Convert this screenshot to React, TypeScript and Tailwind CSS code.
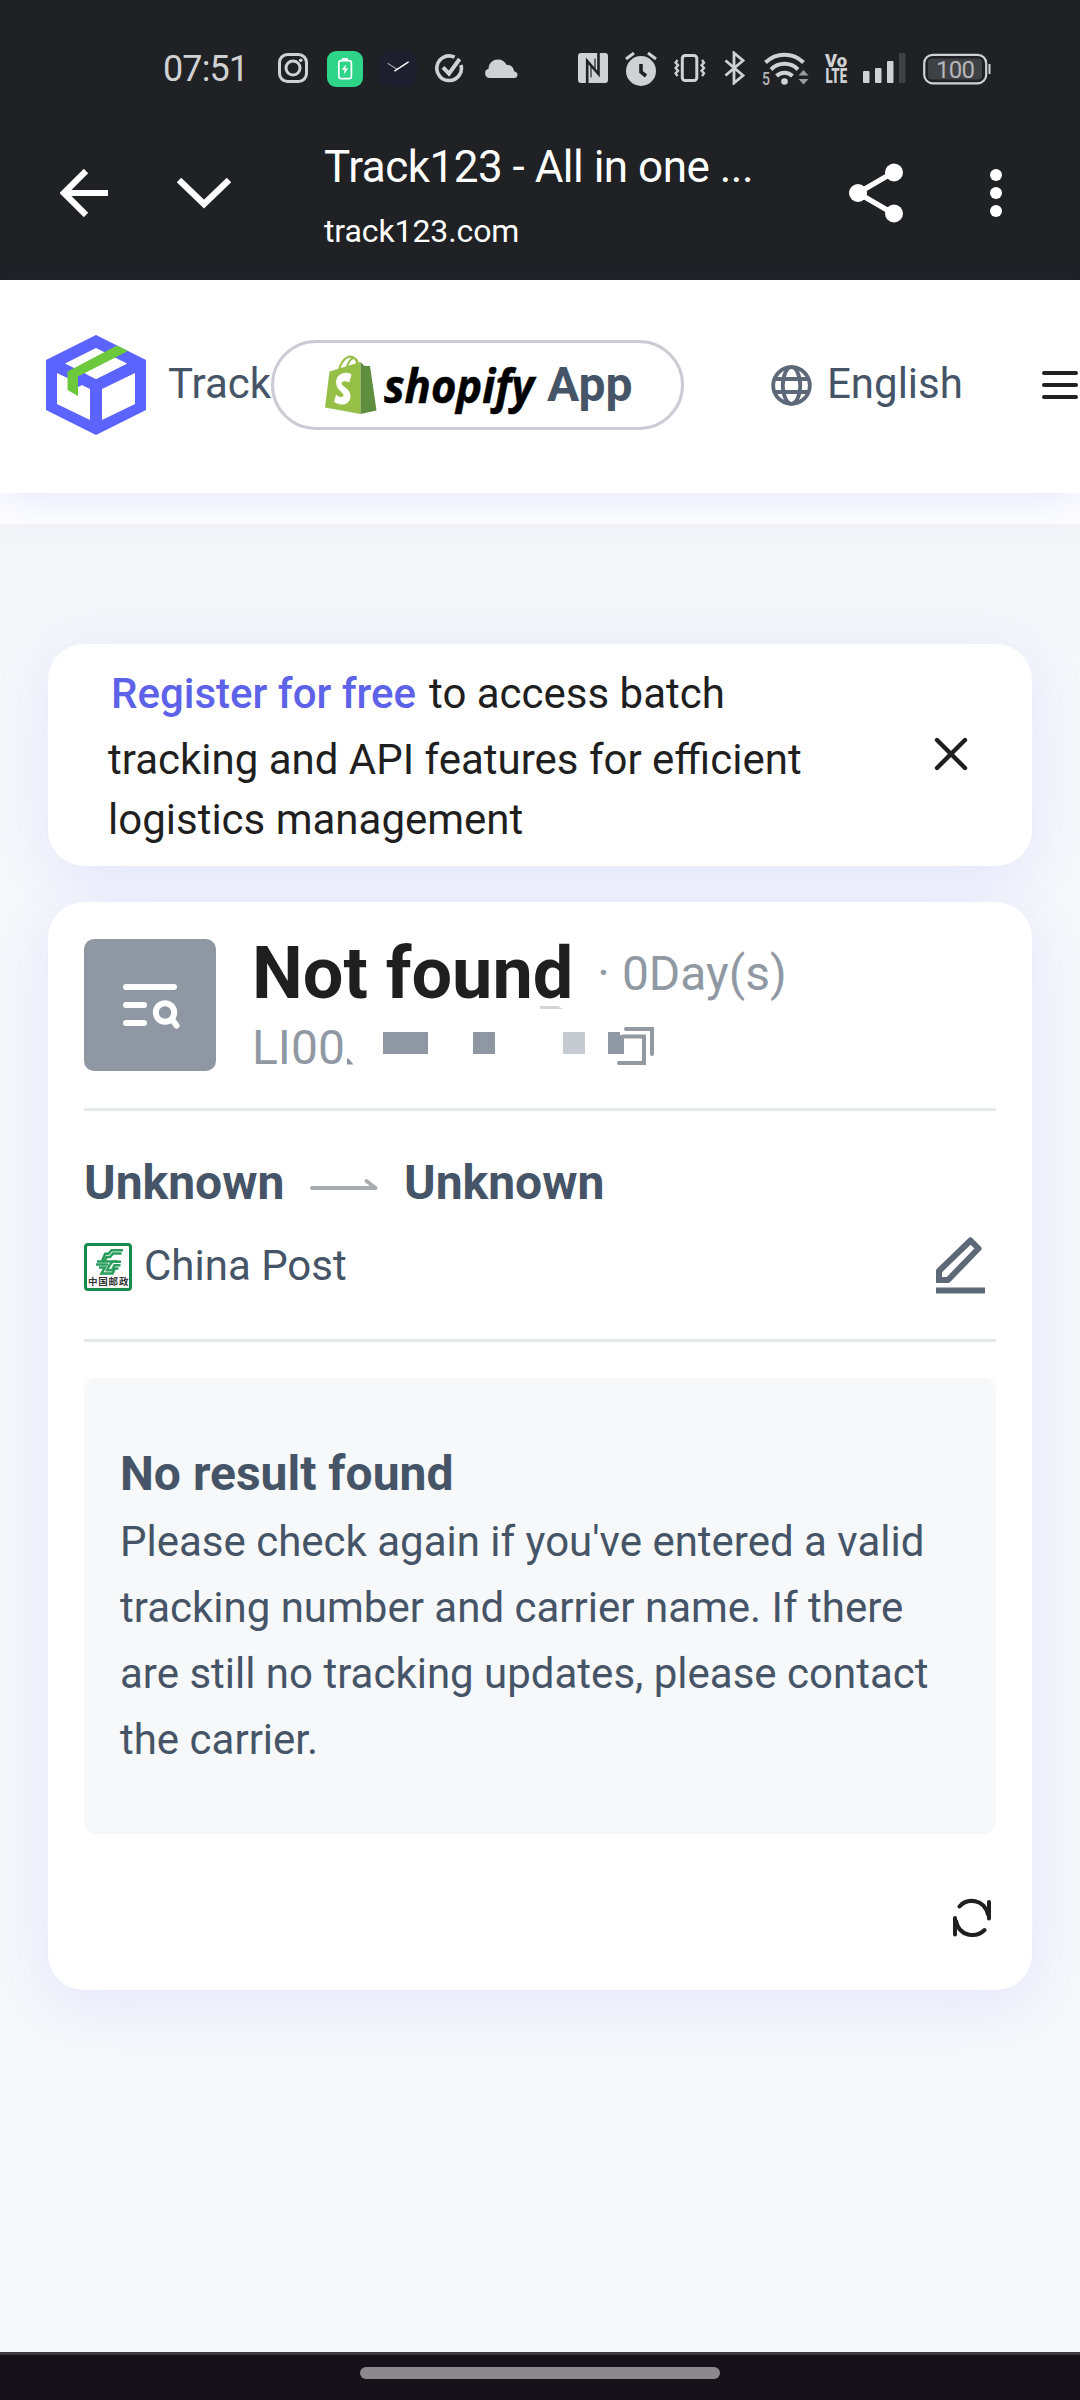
import type { ReactNode } from "react";

type IconProps = { className?: string };

function StatusBar() {
  return (
    <div className="flex h-[136px] items-center pl-[163px] text-[#d0d1d3]">
      <span className="mt-[2px] w-[115px] text-[36px] leading-[44px] tracking-[-0.9px]">07:51</span>

      {/* Notificaties */}
      <svg className="h-[30px] w-[30px]" viewBox="0 0 30 30" fill="none" stroke="currentColor" strokeWidth="3">
        <rect x="1.5" y="1.5" width="27" height="27" rx="8" />
        <circle cx="15" cy="15" r="7" />
        <circle cx="22.8" cy="7.2" r="1.8" fill="currentColor" stroke="none" />
      </svg>
      <svg className="ml-[19px] mt-[2px] h-[36px] w-[36px]" viewBox="0 0 36 36" fill="none">
        <rect width="36" height="36" rx="9" fill="#2ed589" />
        <rect x="11.8" y="9.6" width="12.6" height="18" rx="2.4" stroke="#fff" strokeWidth="1.7" />
        <path d="M15.4 9V7.6h5.2V9z" fill="#fff" stroke="#fff" />
        <path d="m18.8 13.4-4 5.4h2.6l-.4 4.4 4.2-5.6h-2.8z" fill="#fff" />
      </svg>
      <svg className="ml-[17px] mt-[2px] h-[36px] w-[37px]" viewBox="0 0 37 36" fill="none" strokeLinecap="round">
        <rect width="37" height="36" rx="9" fill="#1d1f2e" />
        <path d="m8 12.5 9 5.8" stroke="#9a9ca5" strokeWidth="1.2" />
        <path d="m14.8 19.8 13.4-8.6" stroke="#fff" strokeWidth="1.4" />
      </svg>
      <svg className="ml-[18px] mt-[1px] h-[30px] w-[29px]" viewBox="0 0 29 30" fill="none" stroke="currentColor" strokeWidth="3.6">
        <path d="M19.6 3.2A12.3 12.3 0 1 0 26 11" />
        <path d="m8 13.400 6 6.200L24.600 5" strokeWidth="4" />
      </svg>
      <svg className="ml-[21px] mt-[1px] h-[19px] w-[33px]" viewBox="0 0 33 19" fill="currentColor">
        <path d="M4.800 19A4.700 4.700 0 0 1 3.500 9.800C3.800 4 8 .6 13 .6c4 0 7 2 8.400 5.200 4.200-.2 7.200 2.400 7.600 6.400 2.200.3 3.500 1.700 3.500 3.500 0 2-1.400 3.300-3.400 3.300z" />
      </svg>

      {/* Systeem */}
      <svg className="ml-[60px] h-[30px] w-[30px]" viewBox="0 0 30 30" fill="none">
        <rect width="30" height="30" rx="3" fill="currentColor" />
        <path d="M9.200 30V8L20.500 21V0" stroke="#202124" strokeWidth="2.600" />
        <path d="M13 24.500V12M17 5.500V16" stroke="#202124" strokeWidth="1.200" />
      </svg>
      <svg className="ml-[17px] mt-[1px] h-[34px] w-[32px]" viewBox="0 0 32 34" fill="none" stroke="currentColor">
        <circle cx="16" cy="19" r="15" fill="currentColor" stroke="none" />
        <path d="m1 7 8-6M31 7l-8-6" strokeWidth="3" />
        <path d="M16 12v8l5 4" stroke="#202124" strokeWidth="3.600" />
      </svg>
      <svg className="ml-[17px] h-[30px] w-[32px]" viewBox="0 0 32 30" fill="none" stroke="currentColor">
        <rect x="8.300" y="2.500" width="14.500" height="25" rx="3" strokeWidth="3" />
        <path d="m3.600 7-2 2.600 2.400 2.700-2.400 2.700L4 17.700l-2.400 2.700 2 2.600M28 7l2 2.600-2.400 2.700 2.400 2.700-2.400 2.700 2.400 2.700L28 23" strokeWidth="2.400" />
      </svg>
      <svg className="ml-[18px] h-[34px] w-[22px]" viewBox="0 0 22 34" fill="none" stroke="currentColor" strokeWidth="2.800">
        <path d="M1.500 9.500 19 24.500l-9 7.500V2l9 7.500-17.500 15" />
      </svg>
      <svg className="ml-[16px] h-[36px] w-[48px] overflow-visible" viewBox="0 0 48 36" fill="none" stroke="currentColor" strokeWidth="4">
        <path d="M3.500 12.500a27 27 0 0 1 38 0M9 19.500a19 19 0 0 1 27 0M14.500 26a11.500 11.500 0 0 1 16 0" />
        <circle cx="22.500" cy="31.500" r="3.300" fill="currentColor" stroke="none" />
        <path d="m36.500 25.500 5-5.500 5 5.500zM36.500 29l5 5.500 5-5.500z" fill="#9a9b9d" stroke="none" />
        <text x="0" y="34.500" fontSize="18" fontWeight="500" textLength="8" lengthAdjust="spacingAndGlyphs" fill="#b5b6b8" stroke="none">5</text>
      </svg>
      <svg className="ml-[14px] h-[32px] w-[24px] overflow-visible" viewBox="0 0 24 32" fill="currentColor" fontWeight="900">
        <text x="1" y="14.800" fontSize="19" textLength="22" lengthAdjust="spacingAndGlyphs">Vo</text>
        <text x="1.500" y="31" fontSize="20" textLength="21.500" lengthAdjust="spacingAndGlyphs">LTE</text>
      </svg>
      <svg className="ml-[15px] h-[30px] w-[43px]" viewBox="0 0 43 30" fill="currentColor">
        <rect y="18" width="6.500" height="12" rx="1" />
        <rect x="12" y="15" width="6.500" height="15" rx="1" />
        <rect x="24" y="8" width="6.500" height="22" rx="1" />
        <rect x="36" width="6.500" height="30" rx="1" fill="#404144" />
      </svg>
      <svg className="ml-[17px] mt-[1px] h-[32px] w-[68px]" viewBox="0 0 68 32" fill="none">
        <rect x="1.200" y="1.800" width="62" height="28.500" rx="8.500" stroke="currentColor" strokeWidth="2.200" />
        <rect x="5" y="5.500" width="54" height="21" rx="4" fill="#404144" />
        <path d="M66.500 11v10" stroke="currentColor" strokeWidth="2" />
        <text x="13" y="24.600" fontSize="24" fill="#b5b6b8" textLength="39">100</text>
      </svg>
    </div>
  );
}

function BrowserBar() {
  return (
    <div className="flex h-[144px] items-start pl-[60px] text-white">
      <svg className="mt-[33px] h-[48px] w-[48px]" viewBox="0 0 48 48" fill="none" stroke="currentColor" strokeWidth="6.200">
        <path d="M48 24H5M26 2 4 24l22 22" />
      </svg>
      <svg className="ml-[68px] mt-[40px] h-[34px] w-[56px]" viewBox="0 0 56 34" fill="none" stroke="currentColor" strokeWidth="6.400">
        <path d="m3 4 25 24L53 4" />
      </svg>
      <div className="ml-[92px] mt-[5px] w-[525px]">
        <div className="text-[44px] leading-[52px] tracking-[-0.5px]">Track123 - All in one ...</div>
        <div className="mt-[19px] text-[32px] leading-[38px] tracking-[-0.1px]">track123.com</div>
      </div>
      <svg className="mt-[27px] h-[60px] w-[54px]" viewBox="0 0 54 60" fill="currentColor">
        <path d="M45 9 9 30l36 21" fill="none" stroke="currentColor" strokeWidth="5.400" />
        <circle cx="45" cy="9.500" r="9" />
        <circle cx="9" cy="30" r="9" />
        <circle cx="45" cy="50.500" r="9" />
      </svg>
      <div className="ml-[87px] mt-[33px] flex flex-col gap-[6px]">
        <span className="size-[12px] rounded-full bg-white" />
        <span className="size-[12px] rounded-full bg-white" />
        <span className="size-[12px] rounded-full bg-white" />
      </div>
    </div>
  );
}

function BoxLogo({ className }: IconProps) {
  return (
    <svg className={className} viewBox="0 0 100 100">
      <path d="M50 0 100 25v50L50 100 0 75V25z" fill="#5c64ff" />
      <path d="M50 13 81 28.500 50 44 19 28.500z" fill="#fff" />
      <path d="M11 38 44 54v31L11 69z" fill="#fff" />
      <path d="M89 38 56 54v31L89 69z" fill="#fff" />
      {/* tape across the lid keeps a thin lid edge in front of it */}
      <path d="m31 35 18 9-17 8z" fill="#5c64ff" />
      <path d="m50 44-9-4.500 22-11L81 28.500z" fill="#fff" />
      <path d="m71 10.500 11 5.500-50 25.500V61l-10.500-6V36.500z" fill="#6cc93c" />
    </svg>
  );
}

function ShopifyLogo({ className }: IconProps) {
  return (
    <svg className={className} viewBox="0 0 210 66">
      <path d="M13.500 17C15 8 20 2 25 1.500c5 0 7.500 5 8 11M21.500 15C22.500 7 26 3 29 3c3 .5 4 4 4.500 9" fill="none" stroke="#95bf47" strokeWidth="2" />
      <path d="M4.500 16.500 35.500 7v52L0 52.500z" fill="#95bf47" />
      <path d="M35.500 7l4 4h5.500l6.500 44.500-16 3.500z" fill="#5e8e3e" />
      <path
        d="m26.500 19.500-2.200 8c-2-1-4-1.300-5.500-1.100-2.300.2-2.600 1.700-1.800 3 1.600 2.600 8.500 4.800 8.500 11.500 0 5.600-3.900 8.800-9 8.600-3.500-.1-5.500-1.300-7.500-3l2.100-6.700c1.700 1.400 3.600 2.400 5.400 2.300 1.900-.1 2.400-1.800 1.600-3.200-1.600-2.700-7-4.700-7-11.400 0-6 4.600-10 10.500-9.700 2.500.1 4 .8 4.900 1.700z"
        fill="#fff"
      />
      <text x="59" y="48" fontFamily="'Open Sans'" fontSize="47" fontWeight="700" fontStyle="italic" textLength="150" lengthAdjust="spacingAndGlyphs" stroke="#000" strokeWidth="0.600">
        shopify
      </text>
    </svg>
  );
}

function SiteHeader() {
  return (
    <header className="relative flex h-[213px] items-start bg-white pl-[46px] text-[42px] leading-[50px] text-[#455466] shadow-[0_12px_36px_rgba(92,100,255,0.13)]">
      <BoxLogo className="mt-[55px] h-[100px] w-[100px]" />
      <span className="ml-[22px] mt-[79px] w-[103px]">Track</span>
      <a className="mt-[60px] flex h-[90px] w-[413px] items-start rounded-full border-[3px] border-[#c9ccd2] bg-white pl-[51px]">
        <ShopifyLogo className="mt-[12px] h-[66px] w-[210px] overflow-visible" />
        <b className="ml-[12px] mt-[17px] text-[48px] leading-[50px]">App</b>
      </a>
      <svg className="ml-[87px] mt-[85px] h-[41px] w-[41px]" viewBox="0 0 41 41" fill="none" stroke="#5d6878" strokeWidth="3.800">
        <circle cx="20.500" cy="20.500" r="18.300" />
        <ellipse cx="20.500" cy="20.500" rx="8.700" ry="18.300" />
        <path d="M3 14h35M3 27h35" />
      </svg>
      <span className="ml-[15px] mt-[79px]">English</span>
      <div className="ml-[79px] mt-[91px] flex flex-col gap-[8px]">
        <span className="h-[4px] w-[36px] rounded-full bg-[#1f1f1f]" />
        <span className="h-[4px] w-[36px] rounded-full bg-[#1f1f1f]" />
        <span className="h-[4px] w-[36px] rounded-full bg-[#1f1f1f]" />
      </div>
    </header>
  );
}

function Card({ className, children }: { className: string; children: ReactNode }) {
  return (
    <section className={`mx-[48px] rounded-[36px] bg-white shadow-[0_12px_60px_rgba(92,100,255,0.12)] ${className}`}>
      {children}
    </section>
  );
}

function RegisterNotice() {
  return (
    <Card className="flex h-[222px] pl-[60px] text-[42px] text-[#1f1f1f]">
      <div className="w-[826px] pt-[17px]">
        <p className="ml-[3px] leading-[66px]">
          <a className="mr-[13px] font-medium text-[#5e62e8]">Register for free</a>
          to access batch
        </p>
        <p className="leading-[66px]">tracking and API features for efficient</p>
        <p className="-mt-[3px] leading-[60px]">logistics management</p>
      </div>
      <svg className="mt-[93px] h-[34px] w-[34px]" viewBox="0 0 34 34" fill="none" stroke="currentColor" strokeWidth="4.400" strokeLinecap="round">
        <path d="m3 3 28 28M31 3 3 31" />
      </svg>
    </Card>
  );
}

function ChinaPostLogo() {
  return (
    <svg className="h-[48px] w-[48px]" viewBox="0 0 48 48" fill="none">
      <rect x="1.500" y="1.500" width="45" height="45" rx="2.500" fill="#fff" stroke="#178a4b" strokeWidth="3" />
      <g stroke="#2a9d5d" strokeWidth="2.500">
        <path d="M39 7.200H27.500l-3 3.500h-3.300l-3.200 7.500" />
        <path d="M37.500 10.500H29l-3 3.500h-3.500l-2 4.500H34" />
        <path d="M12 21.500h12M13 18.600h7M15 24.400h6l-3.500 6h11l2.500-5h3.500" />
        <path d="M37 18.800h-8.500l-3 3.500-2.500 5h5l2.500-5h6" />
      </g>
      <text x="4 14.300 24.600 34.900" y="42" fontFamily="'Noto Sans CJK SC'" fontSize="9.500" fontWeight="700" fill="#333">中国邮政</text>
    </svg>
  );
}

function TrackingCard() {
  return (
    <Card className="mt-[36px] flex h-[1088px] flex-col px-[36px] pt-[37px]">
      <div className="flex h-[172px] border-b-[3px] border-[#e5e7e8]">
        <svg className="h-[132px] w-[132px] rounded-[10px] bg-[#8f98a2]" viewBox="0 0 132 132" fill="none" stroke="#fff" strokeWidth="6" strokeLinecap="round">
          <path d="M42 48h48M42 66h18M42 84h18" />
          <circle cx="81" cy="73.500" r="9.200" />
          <path d="m88.500 81 4 5.500" />
        </svg>
        <div className="ml-[36px] text-[48px] leading-[56px] text-[#9099a3]">
          <div className="flex h-[69px] items-start">
            <b className="mt-[1px] text-[72px] leading-[68px] text-[#1f1f1f]">Not found</b>
            <span className="ml-[24px] mt-[7px]">·</span>
            <span className="ml-[12px] mt-[7px]">0Day(s)</span>
          </div>
          <div className="flex h-[56px] items-start">
            <span className="mt-[12px] w-[94px]">LI00</span>
            {/* Afgeschermd deel van het trackingnummer + kopieerknop */}
            <svg className="-mt-[3px] h-[62px] w-[316px]" viewBox="0 0 316 62" fill="none">
              <path d="M194 1h18l5 3h-23z" fill="#d3d4d5" />
              <path d="M1 53.500h1.500l5 6H1z" fill="#8f98a2" />
              <path d="M37 27h45v22H37zM127 27h22v22h-22z" fill="#8f98a2" />
              <path d="M217 27h22v22h-22z" fill="#c6cad1" />
              <path d="M262 27h12v3h4v19h-16z" fill="#8f98a2" />
              <path d="M277 31.500h21V58h-25M280 24h26v25" stroke="#9399a0" strokeWidth="4" strokeLinecap="round" />
            </svg>
          </div>
        </div>
      </div>

      <div className="flex h-[231px] flex-col border-b-[3px] border-[#e5e7e8]">
        <div className="mt-[44px] flex items-start text-[48px] font-bold leading-[56px] text-[#455466]">
          <span className="w-[226px]">Unknown</span>
          <svg className="mt-[22px] h-[14px] w-[68px]" viewBox="0 0 68 14" fill="none" stroke="#a8acae" strokeWidth="4" strokeLinecap="round" strokeLinejoin="round">
            <path d="M2 11h63.500l-9-7" />
          </svg>
          <span className="ml-[26px]">Unknown</span>
        </div>
        <div className="mt-[26px] flex items-start">
          <div className="mt-[6px]">
            <ChinaPostLogo />
          </div>
          <span className="ml-[12px] mt-[4px] text-[42px] leading-[50px] text-[#455466]">China Post</span>
          <svg className="ml-auto mr-[11px] h-[57px] w-[49px]" viewBox="0 0 49 57" fill="none" stroke="#5d6878" strokeWidth="6">
            <path d="M3 43V34L34.500 3.500l8 8L12 43z" strokeLinejoin="round" />
            <path d="M0 46V33l6 2v5h7l2 2-2.500 4z" fill="#5d6878" stroke="none" />
            <path d="M0 53.500h49" />
          </svg>
        </div>
      </div>

      <div className="mt-[36px] h-[456px] rounded-[12px] bg-[#f6f8fa] px-[36px] pt-[63px] text-[42px] leading-[66px] text-[#455466]">
        <h2 className="text-[48px] font-bold">No result found</h2>
        <p className="mt-[2px]">
          Please check again if you've entered a valid
          <br />
          tracking number and carrier name. If there
          <br />
          are still no tracking updates, please contact
          <br />
          the carrier.
        </p>
      </div>

      <svg className="ml-auto mr-[4px] mt-[64px] h-[40px] w-[40px]" viewBox="0 0 40 40" fill="none" stroke="#1f1f1f" strokeWidth="4" strokeLinecap="round">
        <path d="M7.500 8.500C15-.2 32 .5 36 16.500M37 4v16.500" />
        <path d="M32.500 32C24 40.500 7 38.500 4 23M3 20v16.500" />
      </svg>
    </Card>
  );
}

export default function App() {
  return (
    <div className="flex h-[2400px] w-[1080px] flex-col overflow-hidden bg-[#f6f8fb] font-[Roboto,sans-serif]">
      <div className="h-[280px] bg-[#202124]">
        <StatusBar />
        <BrowserBar />
      </div>
      <div className="h-[244px] bg-white">
        <SiteHeader />
      </div>
      <main className="h-[1828px] bg-linear-to-b from-[#f3f5f8] to-[#f6f8fb] to-10% pt-[120px]">
        <RegisterNotice />
        <TrackingCard />
      </main>
      <footer className="flex h-[48px] justify-center border-t-[3px] border-[#3b393d] bg-[#17121a] pt-[12px]">
        <span className="h-[12px] w-[360px] rounded-full bg-[#8b898d]" />
      </footer>
    </div>
  );
}
